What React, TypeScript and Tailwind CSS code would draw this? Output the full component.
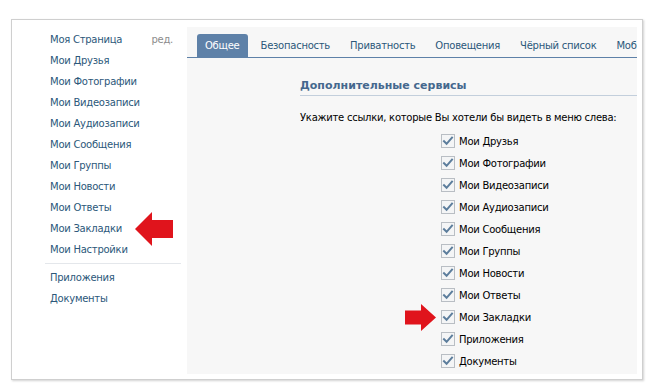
import React from "react";

const leftItems = [
  "Мои Друзья",
  "Мои Фотографии",
  "Мои Видеозаписи",
  "Мои Аудиозаписи",
  "Мои Сообщения",
  "Мои Группы",
  "Мои Новости",
  "Мои Ответы",
  "Мои Закладки",
  "Мои Настройки",
];

const checks = [
  "Мои Друзья",
  "Мои Фотографии",
  "Мои Видеозаписи",
  "Мои Аудиозаписи",
  "Мои Сообщения",
  "Мои Группы",
  "Мои Новости",
  "Мои Ответы",
  "Мои Закладки",
  "Приложения",
  "Документы",
];

const tabs = ["Безопасность", "Приватность", "Оповещения", "Чёрный список", "Мобильные сервисы"];

function CheckBox() {
  return (
    <svg width="14" height="14" viewBox="0 0 14 14" className="shrink-0">
      <rect x="0.5" y="0.5" width="13" height="13" fill="#f4f5f6" stroke="#b9bec4" />
      <path d="M3 7.2 L5.6 9.8 L11 3.6" fill="none" stroke="#5c7d9c" strokeWidth="2" strokeLinecap="square" />
    </svg>
  );
}

function ArrowLeft() {
  return (
    <svg width="38" height="34" viewBox="0 0 38 34">
      <polygon points="0,17 17,0 17,8 38,8 38,26 17,26 17,34" fill="#e0141c" />
    </svg>
  );
}

function ArrowRight() {
  return (
    <svg width="31" height="27" viewBox="0 0 31 27">
      <polygon points="31,13.5 16,0 16,6.5 0,6.5 0,20.5 16,20.5 16,27" fill="#e0141c" />
    </svg>
  );
}

export default function App() {
  return (
    <div
      className="w-[653px] h-[390px] bg-white pl-[11px] pt-[19px] text-[10px] tracking-[-0.25px]"
      style={{ fontFamily: '"DejaVu Sans", sans-serif' }}
    >
      <div className="w-[632px] h-[361px] border border-[#cfcfcf] shadow-[1px_1px_2px_rgba(0,0,0,0.18)] flex bg-white">
        {/* left menu */}
        <div className="w-[175px] shrink-0 pt-[9px] relative">
          <div className="flex items-center h-[21px] pl-[38px] pr-[14px]">
            <span className="text-[#2b587a]">Моя Страница</span>
            <span className="ml-auto text-[#8c8c8c]">ред.</span>
          </div>
          {leftItems.map((t) => (
            <div key={t} className="flex items-center h-[21px] pl-[38px] text-[#2b587a]">
              {t}
            </div>
          ))}
          <div className="ml-[33px] mr-[6px] mt-[3px] mb-[3px] h-px bg-[#e4e7eb]" />
          <div className="flex items-center h-[21px] pl-[38px] text-[#2b587a]">Приложения</div>
          <div className="flex items-center h-[21px] pl-[38px] text-[#2b587a]">Документы</div>
          <div className="absolute left-[123px] top-[192px]">
            <ArrowLeft />
          </div>
        </div>
        {/* right panel */}
        <div className="flex-1 mt-[7px] mr-[5px] mb-[5px] bg-[#f7f7f7] overflow-hidden">
          <div className="flex items-end pl-[10px] pt-[7px] border-b border-[#5e81a8] whitespace-nowrap">
            <div className="h-[23px] px-[8px] mr-[3px] flex items-center bg-[#5e81a8] text-white rounded-t-[3px]">
              Общее
            </div>
            {tabs.map((t) => (
              <div key={t} className="h-[23px] px-[10px] flex items-center text-[#2b587a]">
                {t}
              </div>
            ))}
          </div>
          <div className="pl-[113px] pr-[0px] pt-[21px]">
            <div className="font-bold text-[11px] leading-[14px] tracking-normal text-[#45688e] pb-[2px] border-b border-[#c3cfdc]">
              Дополнительные сервисы
            </div>
            <div className="mt-[14px] leading-[15px] text-black whitespace-nowrap">
              Укажите ссылки, которые Вы хотели бы видеть в меню слева:
            </div>
            <div className="mt-[5px] pl-[141px]">
              {checks.map((c) => (
                <div key={c} className="relative flex items-center h-[22px] gap-[4px] text-black">
                  <CheckBox />
                  <span>{c}</span>
                  {c === "Мои Закладки" && (
                    <div className="absolute left-[-36px] top-[-2px]">
                      <ArrowRight />
                    </div>
                  )}
                </div>
              ))}
            </div>
          </div>
        </div>
      </div>
    </div>
  );
}
